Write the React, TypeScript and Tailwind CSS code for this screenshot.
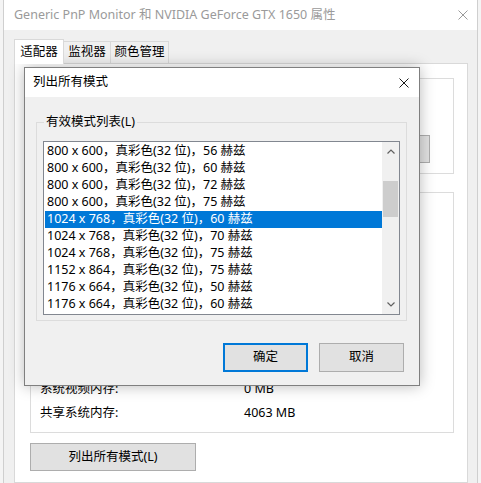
import React from "react";

const FONT = "font-[family-name:'Noto_Sans','Noto_Sans_CJK_SC',sans-serif]";

const modes = [
    "800 x 600，真彩色(32 位)，56 赫兹",
    "800 x 600，真彩色(32 位)，60 赫兹",
    "800 x 600，真彩色(32 位)，72 赫兹",
    "800 x 600，真彩色(32 位)，75 赫兹",
    "1024 x 768，真彩色(32 位)，60 赫兹",
    "1024 x 768，真彩色(32 位)，70 赫兹",
    "1024 x 768，真彩色(32 位)，75 赫兹",
    "1152 x 864，真彩色(32 位)，75 赫兹",
    "1176 x 664，真彩色(32 位)，50 赫兹",
    "1176 x 664，真彩色(32 位)，60 赫兹",
];

// only the rows that peek out below the dialog
const infoRows = [
    ["系统视频内存:", "0 MB"],
    ["共享系统内存:", "4063 MB"],
];

const CloseIcon = ({ color }: { color: string }) => (
    <svg width="10" height="10" viewBox="0 0 10 10" className="shrink-0">
        <path d="M0.5 0.5 L9.5 9.5 M9.5 0.5 L0.5 9.5" stroke={color} strokeWidth="1" fill="none" />
    </svg>
);

const Chevron = ({ up }: { up?: boolean }) => (
    <svg width="8" height="5" viewBox="0 0 8 5">
        <path d={up ? "M0.5 4.5 L4 1 L7.5 4.5" : "M0.5 0.5 L4 4 L7.5 0.5"} stroke="#606060" strokeWidth="1.2" fill="none" />
    </svg>
);

export default function App() {
    return (
        <div className={`relative flex h-[483px] w-[481px] overflow-hidden bg-[#f4f4f4] text-[12.5px] text-black ${FONT}`}>
            <div className="w-[3px] shrink-0" />

            {/* main property window */}
            <div className="flex h-full w-[475px] shrink-0 flex-col border-x border-[#cfcfcf] bg-[#f0f0f0]">
                <div className="flex h-[30px] shrink-0 items-center justify-between bg-white pl-[10px] pr-[9px]">
                    <span className="text-[12.5px] text-[#9a9a9a]">Generic PnP Monitor 和 NVIDIA GeForce GTX 1650 属性</span>
                    <CloseIcon color="#9a9a9a" />
                </div>

                <div className="flex flex-1 flex-col pl-[10px] pt-[9px]">
                    <div className="flex h-[24px] items-end">
                        <div className="relative z-10 -mb-px flex h-[25px] w-[50px] items-center justify-center border border-b-0 border-[#d9d9d9] bg-white">适配器</div>
                        <div className="flex h-[22px] w-[47px] items-center justify-center border border-b-0 border-l-0 border-[#d9d9d9] bg-[#f0f0f0]">监视器</div>
                        <div className="-ml-px flex h-[22px] w-[59px] items-center justify-center border border-b-0 border-[#d9d9d9] bg-[#f0f0f0]">颜色管理</div>
                    </div>

                    <div className="flex w-[454px] flex-1 flex-col border border-[#d9d9d9] bg-white pl-[15px] pt-[14px]">
                        {/* adapter type group (mostly hidden by the dialog) */}
                        <div className="flex h-[96px] w-[424px] flex-col justify-end border border-[#dcdcdc]">
                            <div className="mb-[10px] mr-[23px] h-[28px] w-[85px] self-end border border-[#adadad] bg-[#e1e1e1]" />
                        </div>

                        {/* adapter info group */}
                        <div className="mt-[18px] flex h-[241px] w-[424px] flex-col justify-end border border-[#dcdcdc] pb-[7px] pl-[9px]">
                            {infoRows.map(([label, value]) => (
                                <div key={label} className="grid h-[24px] grid-cols-[204px_1fr] items-center">
                                    <span>{label}</span>
                                    <span>{value}</span>
                                </div>
                            ))}
                        </div>

                        <button className="mt-[10px] flex h-[28px] w-[166px] items-center justify-center border border-[#adadad] bg-[#e1e1e1]">列出所有模式(L)</button>
                    </div>
                </div>
            </div>

            {/* list all modes dialog */}
            <div className="absolute left-[24px] top-[67px] flex h-[319px] w-[396px] flex-col border border-[#7f7f7f] bg-[#f0f0f0] shadow-[0_0_14px_rgba(0,0,0,0.28)]">
                <div className="flex h-[29px] shrink-0 items-center justify-between bg-white pl-[8px] pr-[10px]">
                    <span>列出所有模式</span>
                    <CloseIcon color="#1a1a1a" />
                </div>

                <div className="flex flex-col pl-[11px] pt-[25px]">
                    <div className="relative h-[199px] w-[371px] border border-[#dcdcdc]">
                        <span className="absolute -top-[10px] left-[7px] bg-[#f0f0f0] px-[2px] leading-[17px]">有效模式列表(L)</span>

                        <div className="ml-[6px] mt-[18px] flex h-[174px] w-[357px] border border-[#828790] bg-white">
                            <div className="flex w-[338px] flex-col pl-px pt-px">
                                {modes.map((m, i) => (
                                    <div
                                        key={m}
                                        className={`flex h-[17px] shrink-0 items-center whitespace-nowrap pl-[2px] ${i === 4 ? "bg-[#0078d7] text-white" : ""}`}
                                    >
                                        {m}
                                    </div>
                                ))}
                            </div>
                            <div className="flex w-[17px] flex-col bg-[#f0f0f0]">
                                <div className="flex h-[17px] items-center justify-center pt-[2px]"><Chevron up /></div>
                                <div className="flex-1 px-px pt-[22px]">
                                    <div className="h-[36px] w-full bg-[#cdcdcd]" />
                                </div>
                                <div className="flex h-[17px] items-center justify-center pb-[2px]"><Chevron /></div>
                            </div>
                        </div>
                    </div>

                    <div className="mt-[22px] flex justify-end gap-[11px] pr-[15px]">
                        <button className="flex h-[29px] w-[85px] items-center justify-center border-2 border-[#0078d7] bg-[#e1e1e1]">确定</button>
                        <button className="flex h-[29px] w-[85px] items-center justify-center border border-[#adadad] bg-[#e1e1e1]">取消</button>
                    </div>
                </div>
            </div>
        </div>
    );
}
